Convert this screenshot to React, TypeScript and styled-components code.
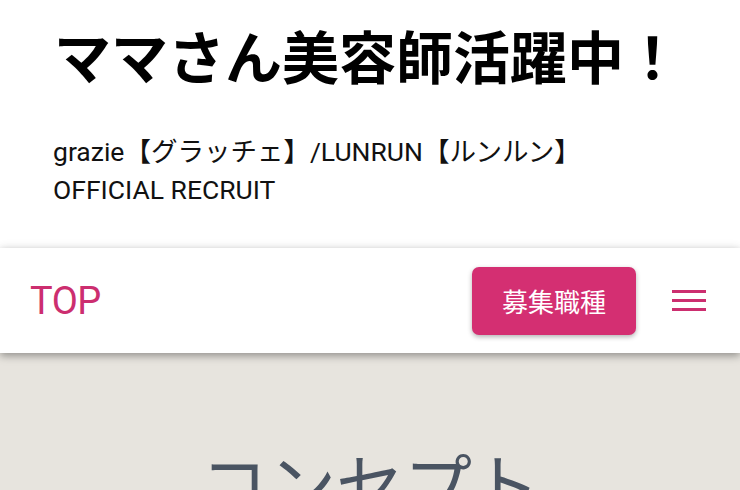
import React, { FC } from 'react'
import styled, { createGlobalStyle } from 'styled-components'

const GlobalStyle = createGlobalStyle`
	html, body {
		margin: 0;
		padding: 0;
		overflow: hidden;
		background: #ffffff;
	}
	body {
		font-family: Roboto, 'Noto Sans CJK JP', sans-serif;
	}
`

const Page = styled.div`
	width: 740px;
	height: 490px;
	display: flex;
	flex-direction: column;
	overflow: hidden;
`

const Hero = styled.div`
	padding: 17px 30px 39px 54px;
`

const Title = styled.h1`
	margin: 0;
	font-family: 'Noto Sans CJK JP', sans-serif;
	font-size: 57px;
	font-weight: 700;
	line-height: 1.3;
	color: #000;
`

const Subtitle = styled.p`
	margin: 42px 0 0 -1px;
	font-family: Roboto, 'Noto Sans CJK JP', sans-serif;
	font-size: 26.5px;
	line-height: 38px;
	color: #111;
`

const Header = styled.header`
	position: relative;
	z-index: 2;
	height: 105px;
	flex-shrink: 0;
	display: flex;
	align-items: center;
	justify-content: space-between;
	padding: 0 34px 0 30px;
	background: #ffffff;
	box-shadow: 0 3px 8px rgba(0, 0, 0, 0.35), 0 -2px 10px rgba(0, 0, 0, 0.04);
`

const Logo = styled.a`
	font-family: Roboto, sans-serif;
	font-size: 38px;
	font-weight: 400;
	color: #cc2e6f;
	text-decoration: none;
	letter-spacing: -0.5px;
`

const Actions = styled.div`
	display: flex;
	align-items: center;
	gap: 36px;
`

const RecruitButton = styled.button`
	height: 68px;
	padding: 0 30px;
	border: none;
	border-radius: 7px;
	background: #d42f72;
	color: #ffffff;
	font-family: 'Noto Sans CJK JP', sans-serif;
	font-size: 26px;
	box-shadow: 0 2px 5px rgba(0, 0, 0, 0.3);
`

const Burger = styled.div`
	width: 34px;
	display: flex;
	flex-direction: column;
	gap: 6px;
`

const BurgerLine = styled.span`
	display: block;
	height: 3px;
	background: #cc2e6f;
`

const Concept = styled.section`
	flex: 1;
	background: #e7e4de;
	display: flex;
	justify-content: center;
	padding-top: 88px;
`

const ConceptTitle = styled.h2`
	margin: 0;
	font-family: 'Noto Sans CJK JP', sans-serif;
	font-size: 68px;
	font-weight: 400;
	line-height: 1.2;
	color: #4a5462;
	white-space: nowrap;
`

const App: FC = () => (
	<Page>
		<GlobalStyle />
		<Hero>
			<Title>ママさん美容師活躍中！</Title>
			<Subtitle>
				grazie【グラッチェ】/LUNRUN【ルンルン】
				<br />
				OFFICIAL RECRUIT
			</Subtitle>
		</Hero>
		<Header>
			<Logo href="#">TOP</Logo>
			<Actions>
				<RecruitButton>募集職種</RecruitButton>
				<Burger>
					<BurgerLine />
					<BurgerLine />
					<BurgerLine />
				</Burger>
			</Actions>
		</Header>
		<Concept>
			<ConceptTitle>コンセプト</ConceptTitle>
		</Concept>
	</Page>
)

export default App
